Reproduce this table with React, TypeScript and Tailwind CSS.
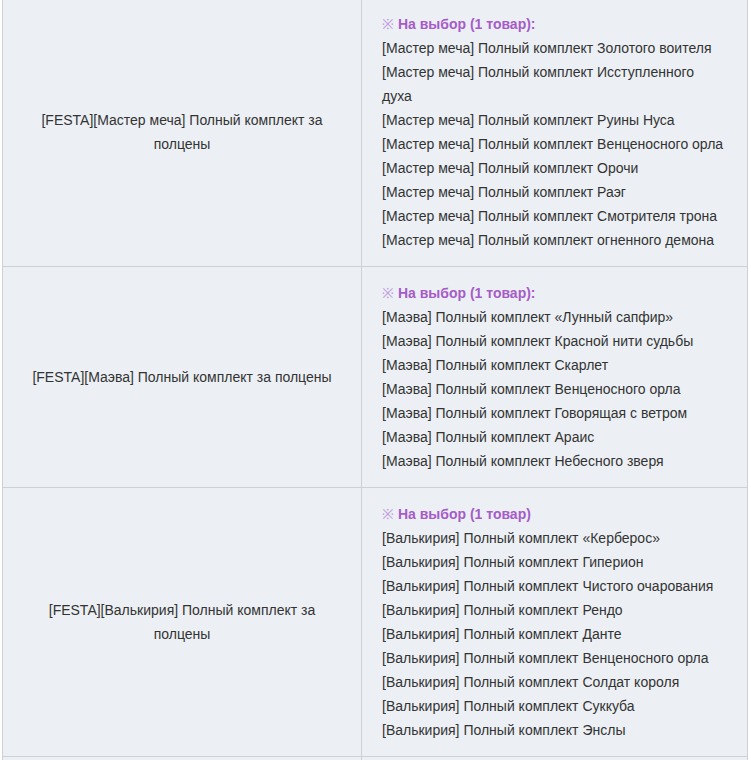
const rows = [
  {
    title: "[FESTA][Мастер меча] Полный комплект за полцены",
    heading: "На выбор (1 товар):",
    items: [
      "[Мастер меча] Полный комплект Золотого воителя",
      "[Мастер меча] Полный комплект Исступленного духа",
      "[Мастер меча] Полный комплект Руины Нуса",
      "[Мастер меча] Полный комплект Венценосного орла",
      "[Мастер меча] Полный комплект Орочи",
      "[Мастер меча] Полный комплект Раэг",
      "[Мастер меча] Полный комплект Смотрителя трона",
      "[Мастер меча] Полный комплект огненного демона",
    ],
  },
  {
    title: "[FESTA][Маэва] Полный комплект за полцены",
    heading: "На выбор (1 товар):",
    items: [
      "[Маэва] Полный комплект «Лунный сапфир»",
      "[Маэва] Полный комплект Красной нити судьбы",
      "[Маэва] Полный комплект Скарлет",
      "[Маэва] Полный комплект Венценосного орла",
      "[Маэва] Полный комплект Говорящая с ветром",
      "[Маэва] Полный комплект Араис",
      "[Маэва] Полный комплект Небесного зверя",
    ],
  },
  {
    title: "[FESTA][Валькирия] Полный комплект за полцены",
    heading: "На выбор (1 товар)",
    items: [
      "[Валькирия] Полный комплект «Керберос»",
      "[Валькирия] Полный комплект Гиперион",
      "[Валькирия] Полный комплект Чистого очарования",
      "[Валькирия] Полный комплект Рендо",
      "[Валькирия] Полный комплект Данте",
      "[Валькирия] Полный комплект Венценосного орла",
      "[Валькирия] Полный комплект Солдат короля",
      "[Валькирия] Полный комплект Суккуба",
      "[Валькирия] Полный комплект Энслы",
    ],
  },
];

export default function App() {
  return (
    <div className="min-h-screen bg-white font-['Liberation_Sans',Arial,sans-serif] text-[14px] leading-[24px] text-[#333]">
      <div className="ml-[2px] mt-[-3px] w-[746px] border-x border-t border-[#cdd1d5] bg-[#ecf0f4]">
        {rows.map((row, i) => (
          <div key={i} className="flex border-b border-[#cdd1d5]">
            <div className="flex w-[359px] shrink-0 items-center justify-center border-r border-[#cdd1d5] px-5 text-center">
              {row.title}
            </div>
            <div className="flex-1 px-5 py-[14px]">
              <div className="font-bold text-[#a65bc9]">
                <span className="font-normal text-[#c29ae0]">※</span> {row.heading}
              </div>
              {row.items.map((item) => (
                <div key={item}>{item}</div>
              ))}
            </div>
          </div>
        ))}
        {/* next row starts below the fold */}
        <div className="flex h-[40px] border-b border-[#cdd1d5]">
          <div className="w-[359px] shrink-0 border-r border-[#cdd1d5]" />
          <div className="flex-1" />
        </div>
      </div>
    </div>
  );
}
